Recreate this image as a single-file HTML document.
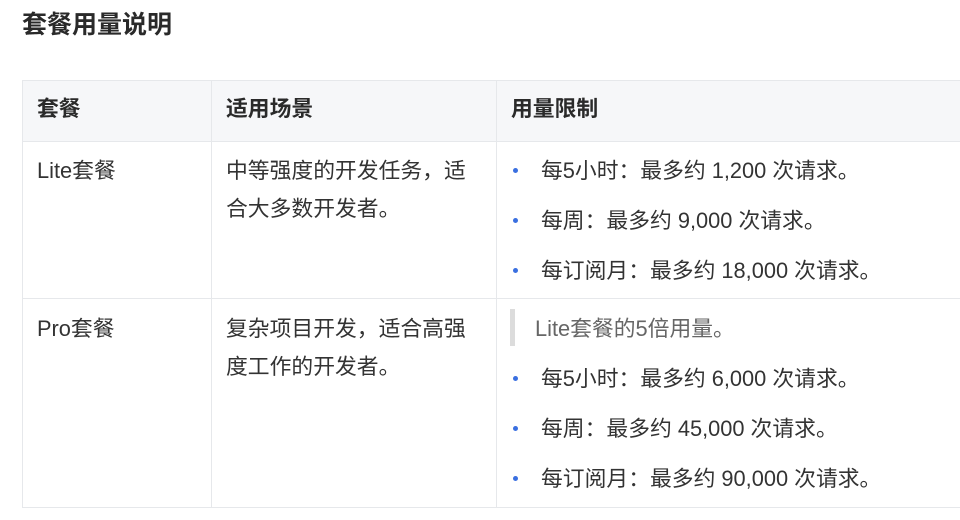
<!DOCTYPE html>
<html><head><meta charset="utf-8"><style>
body{margin:0;width:960px;height:520px;background:#fff;position:relative;overflow:hidden;font-family:"Liberation Sans","Noto Sans CJK SC",sans-serif;color:#333;}
.a{position:absolute;white-space:nowrap;font-size:21.8px;line-height:24px;}
.h{font-weight:bold;color:#2a2a2a;}
.l{position:absolute;background:#e6e8eb;}
.d{position:absolute;width:5px;height:5px;border-radius:50%;background:#3a6fe0;}
</style></head><body>
<div class="a h" style="left:22px;top:13px;font-size:25px;">套餐用量说明</div>
<div style="position:absolute;left:22px;top:80px;width:938px;height:61px;background:#f6f7f9;"></div>
<div class="l" style="left:22px;top:80px;width:938px;height:1px"></div>
<div class="l" style="left:22px;top:141px;width:938px;height:1px"></div>
<div class="l" style="left:22px;top:298px;width:938px;height:1px"></div>
<div class="l" style="left:22px;top:507px;width:938px;height:1px"></div>
<div class="l" style="left:22px;top:80px;width:1px;height:428px"></div>
<div class="l" style="left:211px;top:80px;width:1px;height:428px"></div>
<div class="l" style="left:496px;top:80px;width:1px;height:428px"></div>
<div class="a h" style="left:37px;top:97px">套餐</div>
<div class="a h" style="left:226px;top:97px">适用场景</div>
<div class="a h" style="left:511px;top:97px">用量限制</div>
<div class="a" style="left:37px;top:159px">Lite套餐</div>
<div class="a" style="left:226px;top:159px">中等强度的开发任务，适</div>
<div class="a" style="left:226px;top:197px">合大多数开发者。</div>
<div class="d" style="left:513px;top:168px"></div><div class="a" style="left:541px;top:159px">每5小时：最多约 1,200 次请求。</div>
<div class="d" style="left:513px;top:218px"></div><div class="a" style="left:541px;top:209px">每周：最多约 9,000 次请求。</div>
<div class="d" style="left:513px;top:268px"></div><div class="a" style="left:541px;top:259px">每订阅月：最多约 18,000 次请求。</div>
<div class="a" style="left:37px;top:317px">Pro套餐</div>
<div class="a" style="left:226px;top:317px">复杂项目开发，适合高强</div>
<div class="a" style="left:226px;top:355px">度工作的开发者。</div>
<div style="position:absolute;left:510px;top:309px;width:5px;height:37px;background:#dcdcdc"></div>
<div class="a" style="left:535px;top:317px;color:#666">Lite套餐的5倍用量。</div>
<div class="d" style="left:513px;top:376px"></div><div class="a" style="left:541px;top:367px">每5小时：最多约 6,000 次请求。</div>
<div class="d" style="left:513px;top:426px"></div><div class="a" style="left:541px;top:417px">每周：最多约 45,000 次请求。</div>
<div class="d" style="left:513px;top:476px"></div><div class="a" style="left:541px;top:467px">每订阅月：最多约 90,000 次请求。</div>
</body></html>
